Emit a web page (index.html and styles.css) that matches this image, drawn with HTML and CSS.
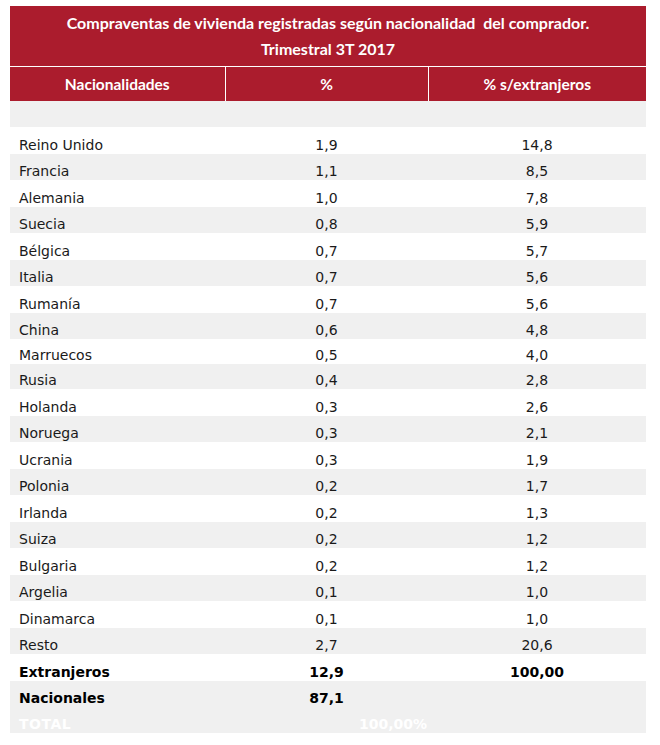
FILE: index.html
```html
<!DOCTYPE html>
<html lang="es">
<head>
<meta charset="utf-8">
<title>Compraventas de vivienda</title>
<link rel="stylesheet" href="styles.css">
</head>
<body>
<table class="tbl">
  <colgroup>
    <col class="c1">
    <col class="c2">
    <col class="c3">
  </colgroup>
  <thead>
    <tr class="title-row">
      <th colspan="3" class="title">Compraventas de vivienda registradas según nacionalidad&nbsp; del comprador.<br>Trimestral 3T 2017</th>
    </tr>
    <tr class="head-row">
      <th class="h">Nacionalidades</th>
      <th class="h">%</th>
      <th class="h">% s/extranjeros</th>
    </tr>
  </thead>
  <tbody>
    <tr class="g r26"><td></td><td></td><td></td></tr>
    <tr class="w r27"><td>Reino Unido</td><td class="n">1,9</td><td class="n">14,8</td></tr>
    <tr class="g r26"><td>Francia</td><td class="n">1,1</td><td class="n">8,5</td></tr>
    <tr class="w r27"><td>Alemania</td><td class="n">1,0</td><td class="n">7,8</td></tr>
    <tr class="g r26"><td>Suecia</td><td class="n">0,8</td><td class="n">5,9</td></tr>
    <tr class="w r27"><td>Bélgica</td><td class="n">0,7</td><td class="n">5,7</td></tr>
    <tr class="g r26"><td>Italia</td><td class="n">0,7</td><td class="n">5,6</td></tr>
    <tr class="w r27"><td>Rumanía</td><td class="n">0,7</td><td class="n">5,6</td></tr>
    <tr class="g r26"><td>China</td><td class="n">0,6</td><td class="n">4,8</td></tr>
    <tr class="w r25"><td>Marruecos</td><td class="n">0,5</td><td class="n">4,0</td></tr>
    <tr class="g r25"><td>Rusia</td><td class="n">0,4</td><td class="n">2,8</td></tr>
    <tr class="w r27"><td>Holanda</td><td class="n">0,3</td><td class="n">2,6</td></tr>
    <tr class="g r26"><td>Noruega</td><td class="n">0,3</td><td class="n">2,1</td></tr>
    <tr class="w r27"><td>Ucrania</td><td class="n">0,3</td><td class="n">1,9</td></tr>
    <tr class="g r26"><td>Polonia</td><td class="n">0,2</td><td class="n">1,7</td></tr>
    <tr class="w r27"><td>Irlanda</td><td class="n">0,2</td><td class="n">1,3</td></tr>
    <tr class="g r26"><td>Suiza</td><td class="n">0,2</td><td class="n">1,2</td></tr>
    <tr class="w r27"><td>Bulgaria</td><td class="n">0,2</td><td class="n">1,2</td></tr>
    <tr class="g r26"><td>Argelia</td><td class="n">0,1</td><td class="n">1,0</td></tr>
    <tr class="w r27"><td>Dinamarca</td><td class="n">0,1</td><td class="n">1,0</td></tr>
    <tr class="g r26"><td>Resto</td><td class="n">2,7</td><td class="n">20,6</td></tr>
    <tr class="w r27 b"><td>Extranjeros</td><td class="n">12,9</td><td class="n">100,00</td></tr>
    <tr class="g r26 b"><td>Nacionales</td><td class="n">87,1</td><td></td></tr>
    <tr class="g r26 b total"><td>TOTAL</td><td class="rt">100,00%</td><td></td></tr>
  </tbody>
</table>
</body>
</html>
```
FILE: styles.css
```css
html, body {
  margin: 0;
  padding: 0;
  background: #ffffff;
}
body {
  padding: 6px 0 0 10px;
}
.tbl {
  border-collapse: collapse;
  border-spacing: 0;
  width: 636px;
  table-layout: fixed;
  font-family: "DejaVu Sans", Verdana, sans-serif;
  font-size: 14px;
  color: #1a1a1a;
}
.c1 { width: 215px; }
.c2 { width: 203px; }
.c3 { width: 218px; }

.title {
  background: #ab1c2d;
  color: #ffffff;
  font-family: Lato, "Open Sans", sans-serif;
  font-weight: bold;
  font-size: 16px;
  line-height: 26px;
  padding: 4px 0 4px 0;
  text-align: center;
  border-bottom: 1px solid #ffffff;
  height: 52px;
}
.h {
  background: #ab1c2d;
  color: #ffffff;
  font-family: Lato, "Open Sans", sans-serif;
  font-weight: bold;
  font-size: 15.5px;
  line-height: 34px;
  height: 34px;
  padding: 0;
  text-align: center;
}
.h + .h {
  border-left: 1px solid #ffffff;
}
td {
  padding: 0 9px 1px 9px;
  vertical-align: bottom;
  line-height: 16px;
  white-space: nowrap;
}
.n { text-align: center; padding-left: 0; padding-right: 0; }
.rt { text-align: right; padding-right: 1px; }
.g { background: #f0f0f0; }
.w { background: #ffffff; }
.r25 { height: 25px; }
.r26 { height: 26px; }
.r27 { height: 27px; }
.b td { font-weight: bold; color: #000000; }
.total td { color: #ffffff; }
.total td:first-child { letter-spacing: 0.5px; }
```
